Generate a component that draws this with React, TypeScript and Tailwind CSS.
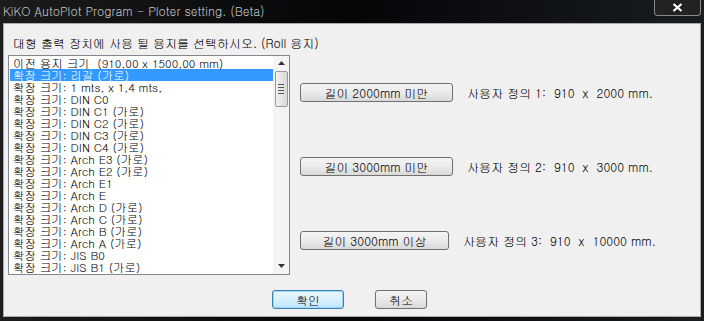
import React from "react";

const ITEMS = [
  "이전 용지 크기  (910,00 x 1500,00 mm)",
  "확장 크기: 리갈 (가로)",
  "확장 크기: 1 mts, x 1,4 mts,",
  "확장 크기: DIN C0",
  "확장 크기: DIN C1 (가로)",
  "확장 크기: DIN C2 (가로)",
  "확장 크기: DIN C3 (가로)",
  "확장 크기: DIN C4 (가로)",
  "확장 크기: Arch E3 (가로)",
  "확장 크기: Arch E2 (가로)",
  "확장 크기: Arch E1",
  "확장 크기: Arch E",
  "확장 크기: Arch D (가로)",
  "확장 크기: Arch C (가로)",
  "확장 크기: Arch B (가로)",
  "확장 크기: Arch A (가로)",
  "확장 크기: JIS B0",
  "확장 크기: JIS B1 (가로)",
];

const ROWS = [
  { btn: "길이 2000mm 미만", label: "사용자 정의 1:  910  x  2000 mm.", w: "w-[153px]" },
  { btn: "길이 3000mm 미만", label: "사용자 정의 2:  910  x  3000 mm.", w: "w-[153px]" },
  { btn: "길이 3000mm 이상", label: "사용자 정의 3:  910  x  10000 mm.", w: "w-[149px]" },
];

const font = "font-['Gulim','Noto_Sans_CJK_KR',sans-serif]";

export default function App() {
  return (
    <div className={`flex h-[321px] w-[704px] flex-col overflow-hidden bg-gradient-to-r from-[#1c1c1c] via-[#050608] to-[#1a1d20] ${font}`}>
      {/* 타이틀 바 */}
      <div className="flex h-[23px] shrink-0 items-start justify-between">
        <span className="mt-[4px] pl-[3px] text-[12px] leading-[14px] text-[#c4c4c4]">
          KiKO AutoPlot Program - Ploter setting. (Beta)
        </span>
        <div className="mr-[3px] flex h-[16px] w-[47px] items-center justify-center rounded-b-[4px] border border-t-0 border-[#8a8a8a] bg-[#202224]">
          <svg width="11" height="9" viewBox="0 0 11 9">
            <path d="M1.5 1 L9.5 8 M9.5 1 L1.5 8" stroke="#ffffff" strokeWidth="2.2" />
          </svg>
        </div>
      </div>

      {/* 본문 */}
      <div className="mx-[3px] mb-[4px] flex flex-1 flex-col border border-[#a9a9a9] bg-[#f0f0f0] text-[12px] leading-[12px] text-black">
        <p className="ml-[9px] mt-[12px] text-[12px] leading-[14px]">
          대형 출력 장치에 사용 될 용지를 선택하시오. (Roll 용지)
        </p>

        <div className="ml-[4px] mt-[5px] flex">
          {/* 리스트 */}
          <div className="flex h-[220px] w-[282px] border border-[#828790] bg-white">
            <div className="flex-1 overflow-hidden pl-[1px] pt-[1px]">
              {ITEMS.map((t, i) => (
                <div
                  key={t}
                  className={`h-[12px] whitespace-pre pl-[3px] text-[11.5px] leading-[12px] ${i === 1 ? "bg-[#3399ff] text-white" : ""}`}
                >
                  {t}
                </div>
              ))}
            </div>
            <div className="flex w-[16px] flex-col items-center bg-[#f4f4f4] pt-[5px]">
              <svg width="7" height="4" viewBox="0 0 7 4">
                <path d="M0 4 L3.5 0 L7 4 Z" fill="#333" />
              </svg>
              <div className="mt-[6px] flex h-[36px] w-[13px] flex-col items-center justify-center gap-[2px] rounded-[2px] border border-[#9a9a9a] bg-gradient-to-r from-[#f2f2f2] to-[#d8d8d8]">
                <span className="h-px w-[6px] bg-[#555]" />
                <span className="h-px w-[6px] bg-[#555]" />
                <span className="h-px w-[6px] bg-[#555]" />
                <span className="h-px w-[6px] bg-[#555]" />
              </div>
              <div className="flex-1" />
              <svg className="mb-[6px]" width="7" height="4" viewBox="0 0 7 4">
                <path d="M0 0 L7 0 L3.5 4 Z" fill="#333" />
              </svg>
            </div>
          </div>

          {/* 버튼 열 */}
          <div className="ml-[10px] mt-[28px] flex flex-col gap-[55px]">
            {ROWS.map((r) => (
              <div key={r.btn} className="flex h-[19px] items-center">
                <button className={`h-[19px] ${r.w} rounded-[3px] border border-[#707070] bg-gradient-to-b from-[#f4f4f4] via-[#ebebeb] to-[#d9d9d9] text-[12px] leading-[12px]`}>
                  {r.btn}
                </button>
                <span className="ml-[14px] whitespace-pre">{r.label}</span>
              </div>
            ))}
          </div>
        </div>

        {/* 확인 / 취소 */}
        <div className="mt-[15px] flex justify-center gap-[31px] pr-[5px]">
          <button className="h-[19px] w-[72px] rounded-[3px] border border-[#3c7fb1] bg-gradient-to-b from-[#eaf6fd] via-[#d9f0fc] to-[#bee6fd] text-[12px] leading-[12px] shadow-[inset_0_0_0_1px_#9fd6f5]">
            확인
          </button>
          <button className="h-[19px] w-[52px] rounded-[3px] border border-[#707070] bg-gradient-to-b from-[#f4f4f4] via-[#ebebeb] to-[#d9d9d9] text-[12px] leading-[12px]">
            취소
          </button>
        </div>
      </div>
    </div>
  );
}
